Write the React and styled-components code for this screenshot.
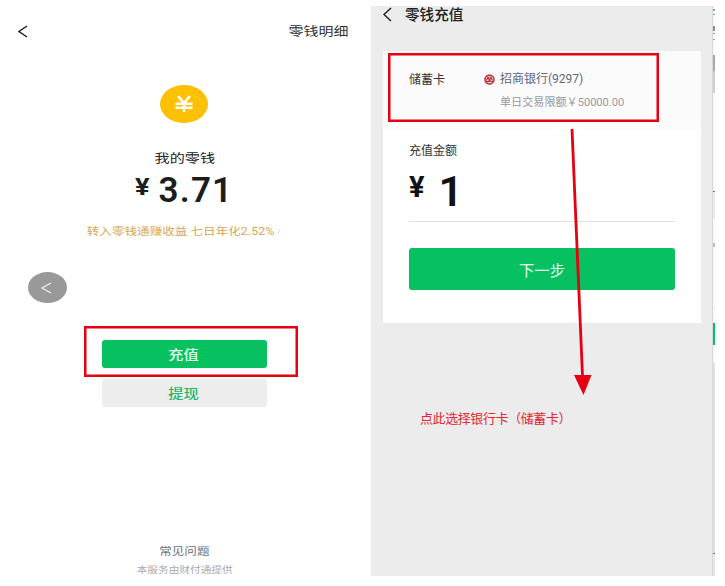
import styled, { createGlobalStyle } from "styled-components";

const edgeMarks = [
	{ gap: 3, height: 2, color: "#9a9a9a" },
	{ gap: 3, height: 1, color: "#70aee8" },
	{ gap: 11, height: 5, color: "#8c8c8c" },
	{ gap: 2, height: 1, color: "#70aee8" },
	{ gap: 5, height: 1, color: "#70aee8" },
	{ gap: 15, height: 16, color: "#a8a8a8" },
	{ gap: 0, height: 22, color: "#d0d0d0" },
	{ gap: 98, height: 1, color: "#777777" },
	{ gap: 0, height: 27, color: "#ececec" },
	{ gap: 24, height: 4, color: "#bbbbbb" },
	{ gap: 60, height: 2, color: "#eeeeee" },
	{ gap: 14, height: 22, color: "#07c160" },
	{ gap: 18, height: 190, color: "#e2e2e2" },
	{ gap: 0, height: 1, color: "#777777" },
	{ gap: 0, height: 22, color: "#e6e6e6" },
];

const Chevron = ({ width, height, color, weight = 1.5, right }) => (
	<svg width={width} height={height} viewBox={`0 0 ${width} ${height}`}>
		<path
			d={
				right
					? `M1 1L${width - 1} ${height / 2}L1 ${height - 1}`
					: `M${width - 1} 1L1 ${height / 2}L${width - 1} ${height - 1}`
			}
			fill="none"
			stroke={color}
			strokeWidth={weight}
		/>
	</svg>
);

const BankLogo = () => (
	<svg width="11" height="11" viewBox="0 0 22 22">
		<circle cx="11" cy="11" r="9" fill="#f3dcde" stroke="#b8373f" strokeWidth="3" />
		<path
			d="M5 13L8 6L10 10V14M17 13L14 6L12 10V14M3 15H19"
			fill="none"
			stroke="#b8373f"
			strokeWidth="2.4"
		/>
	</svg>
);

const BalanceScreen = () => (
	<Balance>
		<BalanceHeader>
			<Chevron width={10} height={13} color="#222222" />
			<Text size={12.4} stretch={1.21} origin="right" color="#333333">零钱明细</Text>
		</BalanceHeader>
		<Coin>
			<svg width="20" height="18" viewBox="0 0 20 18">
				<path
					d="M4 1L10 8L16 1M1.5 8.7H18.5M1.5 12.7H18.5M10 8V17"
					fill="none"
					stroke="#ffffff"
					strokeWidth="2.5"
				/>
			</svg>
		</Coin>
		<BalanceTitle>
			<Text size={12.4} stretch={1.22} color="#222222">我的零钱</Text>
		</BalanceTitle>
		<BalanceAmount>
			<Yen>¥</Yen>
			<Digits>3.71</Digits>
		</BalanceAmount>
		<Promo>
			<Text size={10} stretch={1.258} color="#d8a654">转入零钱通赚收益 七日年化2.52%</Text>
			<Chevron width={4} height={6} color="#dedbd5" weight={1} right />
		</Promo>
		<FloatingBack>
			<Chevron width={11} height={12} color="#ededed" weight={1.3} />
		</FloatingBack>
		<Actions>
			<ActionButton primary>
				<Text size={12.6} stretch={1.21} weight={500} color="#e8fff1">充值</Text>
			</ActionButton>
			<ActionButton>
				<Text size={12.6} stretch={1.21} weight={500} color="#22b66a">提现</Text>
			</ActionButton>
			<Highlight left={-18} top={-14} width={214} height={51} />
		</Actions>
		<Footer>
			<Text size={10.2} stretch={1.23} color="#667080">常见问题</Text>
			<Text size={8.6} stretch={1.24} color="#aaaaaa">本服务由财付通提供</Text>
		</Footer>
	</Balance>
);

const TopUpScreen = () => (
	<TopUp>
		<TopUpHeader>
			<Chevron width={9} height={15} color="#222222" />
			<Text size={14.6} weight={500} color="#222222">零钱充值</Text>
		</TopUpHeader>
		<Card>
			<BankRow>
				<BankLabel>储蓄卡</BankLabel>
				<BankInfo>
					<BankName>
						<BankLogo />
						招商银行(9297)
					</BankName>
					<Limit>单日交易限额￥50000.00</Limit>
				</BankInfo>
				<Highlight left={5} top={2} width={271} height={69} />
			</BankRow>
			<Form>
				<AmountLabel>充值金额</AmountLabel>
				<AmountInput>
					<Yen large>¥</Yen>
					<One>1</One>
				</AmountInput>
				<NextButton>下一步</NextButton>
			</Form>
		</Card>
		<Hint>点此选择银行卡（储蓄卡）</Hint>
		<Arrow width="30" height="270" viewBox="0 0 30 270">
			<path d="M7 0L17.5 247" stroke="#e60012" strokeWidth="2.8" />
			<path d="M9 246H26.5L18.5 266Z" fill="#e60012" />
		</Arrow>
	</TopUp>
);

const App = () => {
	return (
		<>
			<GlobalStyle />
			<Page>
				<BalanceScreen />
				<TopUpScreen />
				<Edge>
					{edgeMarks.map((mark, index) => (
						<Mark key={index} {...mark} />
					))}
				</Edge>
			</Page>
		</>
	);
};

export default App;

const GlobalStyle = createGlobalStyle`
	* {
		box-sizing: border-box;
	}
	body {
		margin: 0;
		background-color: #ffffff;
		font-family: Roboto, "Noto Sans CJK SC", sans-serif;
	}
	svg {
		display: block;
		flex-shrink: 0;
	}
`;

const Page = styled.div`
	display: flex;
	width: 725px;
	height: 586px;
	padding: 6px 0 10px;
	overflow: hidden;
`;

const Text = styled.span.withConfig({
	shouldForwardProp: (prop) => !["size", "stretch", "origin", "weight", "color"].includes(prop),
})`
	font-size: ${(props) => props.size}px;
	font-weight: ${(props) => props.weight || 400};
	line-height: 18px;
	padding-top: 1px;
	color: ${(props) => props.color};
	white-space: nowrap;
	transform: scaleX(${(props) => props.stretch || 1});
	transform-origin: ${(props) => props.origin || "center"};
`;

const Highlight = styled.div.withConfig({
	shouldForwardProp: (prop) => !["left", "top", "width", "height"].includes(prop),
})`
	position: absolute;
	left: ${(props) => props.left}px;
	top: ${(props) => props.top}px;
	width: ${(props) => props.width}px;
	height: ${(props) => props.height}px;
	border: 2px solid #e60012;
	box-shadow: inset 0 0 0 0.5px #e60012;
`;

const Balance = styled.section`
	display: flex;
	flex-direction: column;
	align-items: center;
	width: 371px;
	padding-top: 15px;
`;

const BalanceHeader = styled.header`
	display: flex;
	align-items: center;
	justify-content: space-between;
	align-self: stretch;
	height: 20px;
	padding: 0 22px 0 18px;
`;

const Coin = styled.div`
	display: flex;
	align-items: center;
	justify-content: center;
	width: 48px;
	height: 38px;
	margin: 44px 3px 0 0;
	border-radius: 50%;
	background-color: #fcc104;
`;

const BalanceTitle = styled.div`
	display: flex;
	height: 18px;
	margin: 26px 2px 0 0;
`;

const BalanceAmount = styled.div`
	display: flex;
	align-items: flex-start;
	height: 40px;
	margin: 3px 2px 0 0;
	color: #1d1d1d;
	gap: 10px;
`;

const Yen = styled.span.withConfig({
	shouldForwardProp: (prop) => prop !== "large",
})`
	font-size: ${(props) => (props.large ? 29 : 24)}px;
	font-weight: 700;
	line-height: ${(props) => (props.large ? 38 : 34)}px;
	transform: scaleX(${(props) => (props.large ? 1 : 1.14)});
`;

const Digits = styled.span`
	font-size: 35px;
	font-weight: 600;
	line-height: 41px;
	letter-spacing: 1.2px;
`;

const Promo = styled.div`
	display: flex;
	align-items: center;
	height: 18px;
	margin: 12px 3px 0 0;
	gap: 22px;
	padding-left: 19px;
`;

const FloatingBack = styled.div`
	display: flex;
	align-items: center;
	justify-content: center;
	align-self: flex-start;
	width: 39px;
	height: 31px;
	margin: 32px 0 0 28px;
	padding-right: 2px;
	border-radius: 50%;
	background-color: #999999;
`;

const Actions = styled.div`
	position: relative;
	display: flex;
	flex-direction: column;
	gap: 11px;
	width: 165px;
	margin: 37px 3px 0 0;
`;

const ActionButton = styled.button.withConfig({
	shouldForwardProp: (prop) => prop !== "primary",
})`
	display: flex;
	align-items: center;
	justify-content: center;
	height: 28px;
	padding: 0;
	border: none;
	border-radius: 3px;
	font-family: inherit;
	background-color: ${(props) => (props.primary ? "#07c160" : "#eeeded")};
`;

const Footer = styled.footer`
	display: flex;
	flex-direction: column;
	align-items: center;
	margin: auto 2px -3px 0;

	span:first-child {
		margin-bottom: -1px;
	}
`;

const TopUp = styled.section`
	position: relative;
	width: 341px;
	padding: 0 11px 0 12px;
	background-color: #ececec;
`;

const TopUpHeader = styled.header`
	display: flex;
	align-items: center;
	gap: 13px;
	height: 16px;
`;

const Card = styled.div`
	height: 272px;
	margin-top: 29px;
	background-color: #ffffff;
`;

const BankRow = styled.div`
	position: relative;
	display: flex;
	height: 79px;
	padding: 19px 0 0 26px;
	background: linear-gradient(#fbfbfb 85%, #fdfdfd);
`;

const BankLabel = styled.span`
	width: 75px;
	font-size: 12px;
	line-height: 20px;
	color: #333333;
`;

const BankInfo = styled.div`
	display: flex;
	flex-direction: column;
	gap: 4px;
`;

const BankName = styled.div`
	display: flex;
	align-items: center;
	gap: 5px;
	height: 20px;
	padding-bottom: 2px;
	font-size: 12px;
	line-height: 18px;
	color: #5f687e;
`;

const Limit = styled.span`
	padding-left: 16px;
	font-size: 11.1px;
	line-height: 18px;
	color: #999999;
`;

const Form = styled.div`
	padding: 11px 26px 0;
`;

const AmountLabel = styled.div`
	font-size: 12px;
	line-height: 20px;
	color: #333333;
`;

const AmountInput = styled.div`
	display: flex;
	align-items: flex-start;
	gap: 14px;
	height: 61px;
	padding-top: 7px;
	border-bottom: 1px solid #e2e2e2;
	color: #111111;
`;

const One = styled.span`
	font-size: 43px;
	font-weight: 600;
	line-height: 47px;
`;

const NextButton = styled.button`
	display: block;
	width: 100%;
	height: 42px;
	margin-top: 26px;
	padding: 0;
	border: none;
	border-radius: 3px;
	font-family: inherit;
	font-size: 15.3px;
	color: #e8fff1;
	background-color: #07c160;
`;

const Hint = styled.p`
	margin: 86px 0 0 37px;
	font-size: 12.9px;
	line-height: 20px;
	letter-spacing: -0.3px;
	color: #e62730;
	white-space: nowrap;
`;

/* points from the bank card row down to the hint */
const Arrow = styled.svg`
	position: absolute;
	left: 194px;
	top: 123px;
`;

const Edge = styled.div`
	width: 3px;
	height: 570px;
	border-left: 1px solid #d8d8d8;
	background-color: #f8f8f8;
	overflow: hidden;
`;

const Mark = styled.div.withConfig({
	shouldForwardProp: (prop) => !["gap", "height", "color"].includes(prop),
})`
	height: ${(props) => props.height}px;
	margin-top: ${(props) => props.gap}px;
	background-color: ${(props) => props.color};
`;
